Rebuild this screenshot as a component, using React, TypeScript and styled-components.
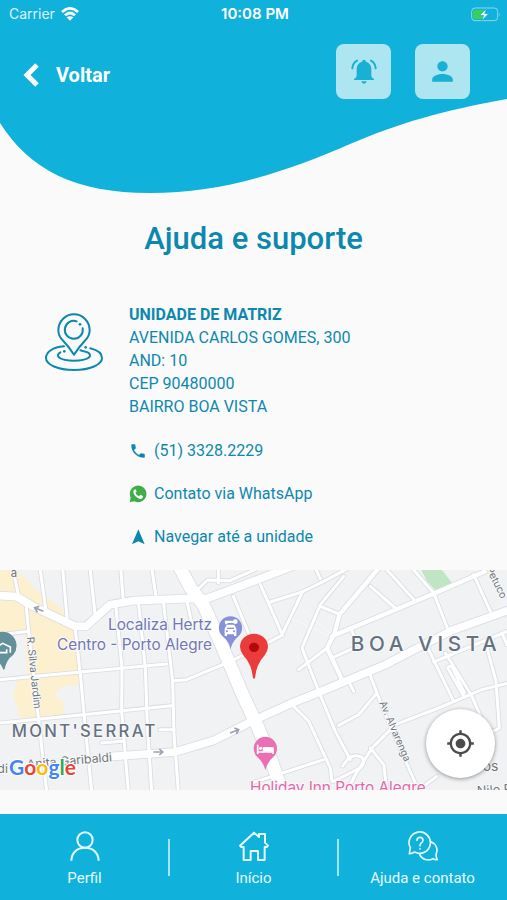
import React from "react";
import styled, { createGlobalStyle } from "styled-components";
import { MdMyLocation, MdPerson, MdPhone } from "react-icons/md";

const BLUE = "#10b1da";
const TEAL = "#0c88ae";

const GlobalStyle = createGlobalStyle`
  *, *::before, *::after { box-sizing: border-box; }
  body { margin: 0; background: #fafafa; font-family: Roboto, "Liberation Sans", sans-serif; }
  h1, h2, p { margin: 0; }
  button { border: 0; padding: 0; font: inherit; cursor: pointer; }
`;

const Screen = styled.div`
  display: flex;
  flex-direction: column;
  min-height: 100vh;
  background: #fafafa;
`;

const Header = styled.header`
  background: ${BLUE};
  color: #fff;
`;

const StatusBar = styled.div`
  display: grid;
  grid-template-columns: 1fr auto 1fr;
  align-items: center;
  height: 28px;
  padding: 0 6px 0 9px;
  font-family: Inter, Roboto, sans-serif;
  font-size: 14px;
  line-height: 20px;
`;

const Carrier = styled.span`
  display: flex;
  align-items: center;
  gap: 6px;
  color: #def5fb;
`;

const Clock = styled.span`
  font-size: 15px;
  font-weight: 600;
`;

const Battery = styled.svg`
  justify-self: end;
`;

const TopBar = styled.div`
  display: flex;
  align-items: center;
  height: 71px;
  padding: 16px 37px 0 23px;
  gap: 24px;
`;

const BackButton = styled.button`
  display: flex;
  align-items: center;
  gap: 16px;
  margin-right: auto;
  background: none;
  color: #fff;
  font-size: 20px;
  font-weight: 700;
  line-height: 24px;
  padding-top: 6px;
`;

const TileButton = styled.button`
  display: flex;
  align-items: center;
  justify-content: center;
  width: 55px;
  height: 55px;
  border-radius: 8px;
  background: #ade5f1;
  color: #19b0d6;
`;

const Wave = styled.svg`
  display: block;
  width: 100%;
  height: 95px;
`;

const Title = styled.h1`
  margin-top: 27px;
  color: ${TEAL};
  font-size: 31px;
  font-weight: 500;
  line-height: 36px;
  text-align: center;
`;

const Unit = styled.section`
  display: grid;
  grid-template-columns: 58px 1fr;
  column-gap: 26px;
  padding: 45px 24px 22px 45px;
  color: ${TEAL};
`;

const PinDrawing = styled.svg`
  margin-top: 11px;
`;

const Address = styled.address`
  font-style: normal;
  font-size: 16px;
  line-height: 23px;
  padding-top: 1px;
`;

const UnitName = styled.h2`
  font-size: 16px;
  line-height: 23px;
  font-weight: 700;
`;

const Contacts = styled.div`
  display: flex;
  flex-direction: column;
  align-items: flex-start;
  gap: 20px;
  margin-top: 21px;
`;

const ContactLink = styled.a`
  display: flex;
  align-items: center;
  gap: 7px;
  color: ${TEAL};
  font-size: 16px;
  line-height: 23px;
  text-decoration: none;

  svg { flex: none; }
`;

const MapArea = styled.section`
  position: relative;
  height: 220px;
  overflow: hidden;
  background: #f0f2f3;
`;

const MapDrawing = styled.svg`
  display: block;
  width: 100%;
  height: 100%;
  font-family: Inter, Roboto, sans-serif;
`;

const LocateButton = styled.button`
  position: absolute;
  right: 12px;
  bottom: 12px;
  display: flex;
  align-items: center;
  justify-content: center;
  width: 69px;
  height: 69px;
  border-radius: 50%;
  background: #fff;
  color: #4b4b4b;
  box-shadow: 0 1px 4px rgba(0, 0, 0, 0.4);
`;

const NavBar = styled.nav`
  display: grid;
  grid-template-columns: repeat(3, 1fr);
  align-items: center;
  height: 86px;
  padding-top: 4px;
  margin-top: auto;
  background: ${BLUE};
`;

const NavItem = styled.a<{ $divided?: boolean }>`
  position: relative;
  display: flex;
  flex-direction: column;
  align-items: center;
  gap: 8px;
  color: #e6fbff;
  font-size: 15px;
  line-height: 18px;
  text-decoration: none;

  &::after {
    content: "";
    display: ${(p) => (p.$divided ? "block" : "none")};
    position: absolute;
    right: -1px;
    top: 8px;
    width: 2px;
    height: 37px;
    background: #a5e4f3;
  }
`;

const WifiIcon = () => (
  <svg width="18" height="14" viewBox="0 0 54 42" fill="none" stroke="#fff" strokeWidth="8" aria-hidden="true">
    <path d="M3 15Q27-7 51 15" />
    <path d="M12 25Q27 11 42 25" />
    <path d="M27 41 17 31Q27 24 37 31Z" fill="#fff" stroke="none" />
  </svg>
);

const BatteryIcon = () => (
  <Battery width="30" height="15" viewBox="0 0 90 45" role="img" aria-label="Carregando">
    <rect x="2" y="3" width="78" height="38" rx="10" fill="none" stroke="#8dd9ec" strokeWidth="3" />
    <path d="M84 17q5 5 0 10z" fill="#8dd9ec" />
    <rect x="6" y="8" width="34" height="28" rx="6" fill="#37d058" />
    <path d="M46 5 26 25h12l-5 15 20-20H41z" fill="#fff" stroke={BLUE} strokeWidth="2" />
  </Battery>
);

const BellIcon = () => (
  <svg width="26" height="26" viewBox="0 0 78 78" fill="currentColor" aria-hidden="true">
    <path d="M39 2q5 0 6 6 15 5 16 21v22q0 4 8 9v3H9v-3q8-5 8-9V29Q18 13 33 8q1-6 6-6z" />
    <path d="M31 67h16q-1 7-8 7t-8-7z" />
    <g fill="none" stroke="currentColor" strokeWidth="6" strokeLinecap="round">
      <path d="M18 5Q5 12 4 28" />
      <path d="M60 5q13 7 14 23" />
    </g>
  </svg>
);

const UnitPin = () => (
  <PinDrawing width="58" height="58" viewBox="45 37 174 174" fill="none" stroke={TEAL} strokeWidth="6" strokeLinecap="round" aria-hidden="true">
    <path d="M132 162Q119 141 100 121Q85 107 85 89A47 48 0 0 1 179 89Q179 107 164 121Q145 141 132 162Z" strokeLinejoin="round" />
    <path d="M158 83A27 27 0 1 1 140 62" />
    <path d="M102 137C68 139 48 155 48 172C48 192 84 208 132 208S216 192 216 172C216 159 204 149 181 143" />
    <path d="M91 155C74 165 87 180 132 180S190 165 173 155L151 149" />
    <g fill={TEAL} stroke="none">
      <circle cx="150" cy="71" r="4" />
      <circle cx="167" cy="140" r="4" />
      <circle cx="103" cy="152" r="4" />
    </g>
  </PinDrawing>
);

const WhatsAppIcon = () => (
  <svg width="18" height="18" viewBox="0 0 54 54" aria-hidden="true">
    <path d="M2 52 5 38A25 25 0 1 1 16 49Z" fill="#3fae49" />
    <path d="M19 13q-7 2-6 9 3 14 20 20 7 1 9-7v-2l-8-4-4 5q-7-3-11-10l4-4-3-7z" fill="#fff" />
  </svg>
);

const ArrowIcon = () => (
  <svg width="18" height="18" viewBox="0 0 54 54" aria-hidden="true">
    <path d="M28 4 47 49 28 40 9 49Z" fill={TEAL} />
  </svg>
);

const ProfileIcon = () => (
  <svg width="30" height="30" viewBox="0 0 90 90" fill="none" stroke="currentColor" strokeWidth="6" aria-hidden="true">
    <circle cx="45" cy="27" r="23" />
    <path d="M4 89C5 65 21 50 45 50S85 65 86 89" />
  </svg>
);

const HomeIcon = () => (
  <svg width="30" height="30" viewBox="0 0 90 90" fill="none" stroke="currentColor" strokeWidth="6" strokeLinejoin="round" aria-hidden="true">
    <path d="M45 5 60 18V9H78V35L87 44 83 48H77V87H57V60H35V87H14V48H7L3 44Z" />
  </svg>
);

const ChatIcon = () => (
  <svg width="30" height="30" viewBox="0 0 90 90" fill="none" stroke="currentColor" strokeWidth="5" strokeLinejoin="round" strokeLinecap="round" aria-hidden="true">
    <path d="M4 68 7 50A32 32 0 1 1 20 63Q12 68 4 68Z" />
    <path d="M69 32C85 39 91 55 84 70Q84 80 88 86Q81 87 75 83C59 91 42 86 35 71" />
    <path d="M27 28Q27 19 36 19T45 28Q45 34 39 37Q36 39 36 44" />
    <path d="M36 53v1" />
  </svg>
);

const minorRoads = [
  "M38 0 56 85M120 0 138 130M188 0 202 160M270 0 286 145M362 0 370 100M455 0 468 85",
  "M78 110 87 200 113 430 140 670M225 175 242 330 255 470 275 670",
  "M347 110 366 300 365 430 385 670M415 100 436 300 442 470 455 670M490 100 518 340 522 500 535 670",
  "M560 95 575 165M0 335 242 312 500 288M0 465 250 440 515 413M0 200 85 190",
  "M480 485H522M305 525 365 520M518 338 560 335 680 285 765 245 845 202 906 75",
  "M700 85 750 205M598 60 622 36 690 38 765 5M655 0V45M755 645 971 575",
  "M781 50 848 202M811 102 906 72 971 40 1046 0M946 0 961 32",
  "M961 115 1016 138M1031 25 961 110 906 240 956 370 1006 490 1051 575M981 240 896 305",
  "M1111 55 1186 120M1156 0 1246 100M1236 0 1301 75 1346 190M1421 20 1471 130",
  "M996 270 1066 238M1056 190 1066 215M1106 310 1131 375 1076 440 1016 472M1131 375 1156 440 1246 645 1260 670",
  "M1286 245 1361 400M1336 255 1416 385 1456 480M1391 385 1343 300Q1348 290 1357 298L1393 375",
  "M1456 220 1488 340 1498 480 1480 490M1301 282 1521 190M1506 195 1521 230",
  "M1186 470 1316 420 1446 365 1521 346M1186 470 1116 540 1066 620 1040 670",
  "M1111 540 1151 590 1161 670M876 410 926 460 991 600 996 640M1001 640 1080 600Q1098 585 1086 568Q1065 557 1046 570L1028 594",
  "M1046 340 1061 370M1250 670 1310 625",
];
const mediumRoads = [
  "M1136 0 1086 60 1018 140 1004 195 981 240 1026 335",
  "M996 205 1186 125 1306 75 1456 10",
];
const mainRoads = [
  "M-10 82 50 86 105 118 225 175H258L330 110 400 98 560 92 620 92 765 38 890-10",
  "M340 565 525 552 640 518 745 465 876 405 956 373 1156 290 1256 238 1356 187 1530 125",
];
const avenue = "M535-10 572 60 610 110 660 220 730 385 775 480 815 580 850 680";

const roadLayers = [
  { paths: minorRoads, width: 9 },
  { paths: mediumRoads, width: 13 },
  { paths: mainRoads, width: 23 },
  { paths: [avenue], width: 38 },
];

const googleLetters: [string, string][] = [
  ["G", "#4285f4"],
  ["o", "#ea4335"],
  ["o", "#fbbc05"],
  ["g", "#4285f4"],
  ["l", "#34a853"],
  ["e", "#ea4335"],
];

const CityMap = () => (
  <MapDrawing viewBox="0 6 1521 660" preserveAspectRatio="xMidYMid slice" role="img" aria-label="Mapa da unidade">
    <g fill="#fdf0cf">
      <path d="M0 0H45L120 75 190 125 195 160 225 180 238 350 190 355 160 380 190 400V440L60 450 40 380 50 335 80 320 75 200H0Z" />
    </g>
    <path d="M1264 6H1326L1356 45 1306 66 1281 40Z" fill="#bfe5c3" />
    <path d="M871 95 1000 205M871 150 990 205" fill="none" stroke="#f8f9fa" strokeWidth="2" />
    <g fill="none" strokeLinejoin="round" strokeLinecap="round" stroke="#d9dde1">
      {roadLayers.map((l) => l.paths.map((d) => <path key={d} d={d} strokeWidth={l.width + 5} />))}
    </g>
    <g fill="none" strokeLinejoin="round" strokeLinecap="round" stroke="#fff">
      {roadLayers.map((l) => l.paths.map((d) => <path key={d} d={d} strokeWidth={l.width} />))}
    </g>
    <g fill="none" stroke="#9aa0b5" strokeWidth="5">
      <path d="M130 130 104 119M118 115 104 119 112 133" />
      <path d="M460 552H488M478 543 488 552 478 561" />
      <path d="M690 495 716 485M703 480 716 485 709 498" />
    </g>

    <g stroke="#f8f9fa" strokeWidth="6" paintOrder="stroke" strokeLinejoin="round">
      <g fill="#7377b2" fontSize="46" textAnchor="end">
        <text x="636" y="185">Localiza Hertz</text>
        <text x="636" y="247">Centro - Porto Alegre</text>
      </g>
      <g fill="#667180" fontWeight="500">
        <text x="35" y="507" fontSize="50" letterSpacing="7">MONT'SERRAT</text>
        <text x="1052" y="249" fontSize="62" letterSpacing="14">BOA VISTA</text>
      </g>
      <g fill="#71757a" fontSize="34">
        <text transform="translate(80 208) rotate(84)" fontSize="31">R. Silva Jardim</text>
        <text transform="translate(82 602) rotate(-5)" fontSize="37">Anita Garibaldi</text>
        <text x="-8" y="614" fontSize="37">di</text>
        <text x="32" y="26">a</text>
        <text transform="translate(1138 404) rotate(67)" fontSize="30">Av. Alvarenga</text>
        <text transform="translate(1458 2) rotate(64)" fontSize="31">Petuco</text>
        <text x="1448" y="609" fontSize="42">os</text>
        <text transform="translate(1432 682) rotate(-4)" fontSize="38">Nilo P</text>
      </g>
      <text x="750" y="675" fontSize="46" fill="#e667a8">Holiday Inn Porto Alegre</text>
    </g>

    <g>
      <path d="M10 305Q3 285-20 265A42 42 0 1 1 40 260Q19 275 14 303Z" fill="#64909c" />
      <path d="M-12 239 8 226 31 237V254M-3 241V254H20V244" fill="none" stroke="#fff" strokeWidth="5" />
    </g>
    <g>
      <path d="M692 244Q688 222 670 207A35 35 0 1 1 713 207Q696 222 692 244Z" fill="#8790d8" />
      <g fill="#fff">
        <path d="M674 182 680 170H703L709 182V204H702V199H681V204H674Z" />
        <circle cx="706" cy="161" r="7" />
        <path d="M674 158H702V165H682V169H676Z" />
      </g>
      <path d="M681 181H702" stroke="#8790d8" strokeWidth="4" />
      <circle cx="681" cy="190" r="3" fill="#8790d8" />
      <circle cx="702" cy="190" r="3" fill="#8790d8" />
    </g>
    <g>
      <path d="M796 606Q790 583 773 568A35 35 0 1 1 819 568Q802 583 796 606Z" fill="#ea70b3" />
      <path d="M773 530V558M773 552H819V558M819 552V540H791V552" fill="none" stroke="#fff" strokeWidth="5" />
      <path d="M790 537H807Q819 538 819 551H790Z" fill="#fff" />
      <circle cx="782" cy="541" r="5" fill="#fff" />
    </g>
    <g>
      <path d="M759 330Q755 288 731 263Q720 250 720 237A42 40 0 0 1 804 237Q804 250 793 263Q769 288 765 330Q762 334 759 330Z" fill="#ec3b3b" />
      <ellipse cx="762" cy="238" rx="15" ry="14" fill="#b00a0a" />
    </g>

    <text x="27" y="622" fontFamily="Lato, sans-serif" fontSize="63" fontWeight="700" stroke="#fff" strokeWidth="7" paintOrder="stroke">
      {googleLetters.map(([letter, color], i) => (
        <tspan key={i} fill={color}>{letter}</tspan>
      ))}
    </text>
  </MapDrawing>
);

export default function App() {
  return (
    <Screen>
      <GlobalStyle />
      <Header>
        <StatusBar>
          <Carrier>Carrier <WifiIcon /></Carrier>
          <Clock>10:08 PM</Clock>
          <BatteryIcon />
        </StatusBar>
        <TopBar>
          <BackButton type="button">
            <svg width="17" height="26" viewBox="0 0 17 26" fill="none" stroke="#fff" strokeWidth="5" aria-hidden="true">
              <path d="M14 3 4 13 14 23" />
            </svg>
            Voltar
          </BackButton>
          <TileButton type="button" aria-label="Notificações"><BellIcon /></TileButton>
          <TileButton type="button" aria-label="Minha conta"><MdPerson size={31} /></TileButton>
        </TopBar>
      </Header>
      <Wave viewBox="0 0 507 95" preserveAspectRatio="none" aria-hidden="true">
        <path d="M0 0H507C440 12 400 24 350 45C290 71 225 94 150 94C75 94 30 71 0 24Z" fill={BLUE} />
      </Wave>
      <main>
        <Title>Ajuda e suporte</Title>
        <Unit>
          <UnitPin />
          <div>
            <Address>
              <UnitName>UNIDADE DE MATRIZ</UnitName>
              <p>AVENIDA CARLOS GOMES, 300</p>
              <p>AND: 10</p>
              <p>CEP 90480000</p>
              <p>BAIRRO BOA VISTA</p>
            </Address>
            <Contacts>
              <ContactLink href="tel:+555133282229"><MdPhone size={18} />(51) 3328.2229</ContactLink>
              <ContactLink href="#whatsapp"><WhatsAppIcon />Contato via WhatsApp</ContactLink>
              <ContactLink href="#navegar"><ArrowIcon />Navegar até a unidade</ContactLink>
            </Contacts>
          </div>
        </Unit>
        <MapArea>
          <CityMap />
          <LocateButton type="button" aria-label="Minha localização"><MdMyLocation size={29} /></LocateButton>
        </MapArea>
      </main>
      <NavBar>
        <NavItem href="#perfil" $divided><ProfileIcon />Perfil</NavItem>
        <NavItem href="#inicio" $divided><HomeIcon />Início</NavItem>
        <NavItem href="#ajuda"><ChatIcon />Ajuda e contato</NavItem>
      </NavBar>
    </Screen>
  );
}
